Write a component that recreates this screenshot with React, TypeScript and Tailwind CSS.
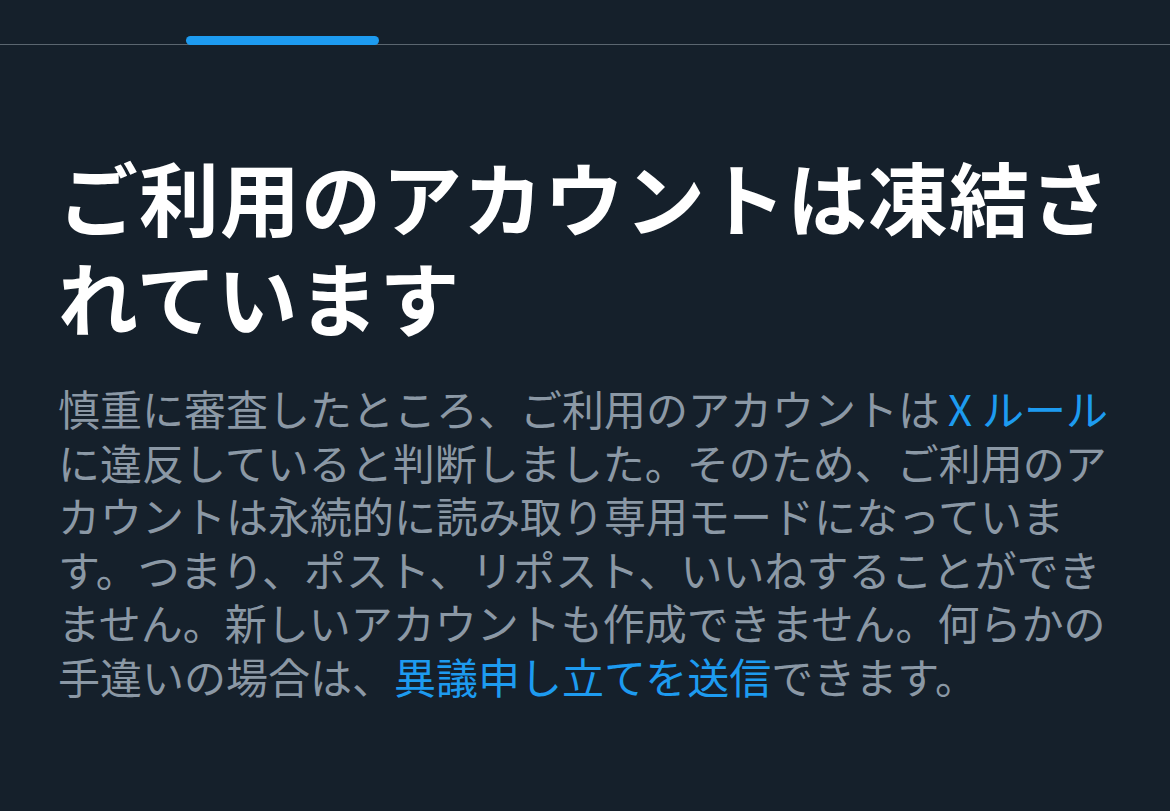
const FONT = '"Noto Sans CJK JP", "Noto Sans", sans-serif';

function TabBar() {
  return (
    <div className="flex h-[45px] items-end border-b border-[#5b6670]">
      <div className="ml-[186px] h-[9px] w-[193px] translate-y-[1px] rounded-full bg-[#1d9bf0]" />
    </div>
  );
}

export default function App() {
  return (
    <div className="min-h-[811px] w-full bg-[#15202b]" style={{ fontFamily: FONT }}>
      <TabBar />
      <main className="pl-[58px] pr-[50px] pt-[100px]">
        <h1 className="text-[80px] leading-[100px] font-bold tracking-[1px] text-white">
          ご利用のアカウントは凍結されています
        </h1>
        <p className="mt-[36px] text-[42px] leading-[53.5px] font-normal text-[#8b98a5]">
          慎重に審査したところ、ご利用のアカウントは
          <a className="ml-[8px] text-[#1d9bf0]">
            <span className="mr-[10px]">X</span>ルール
          </a>
          に違反していると判断しました。そのため、ご利用のアカウントは永続的に読み取り専用モードになっています。つまり、ポスト、リポスト、いいねすることができません。新しいアカウントも作成できません。何らかの手違いの場合は、
          <a className="text-[#1d9bf0]">異議申し立てを送信</a>
          できます。
        </p>
      </main>
    </div>
  );
}
